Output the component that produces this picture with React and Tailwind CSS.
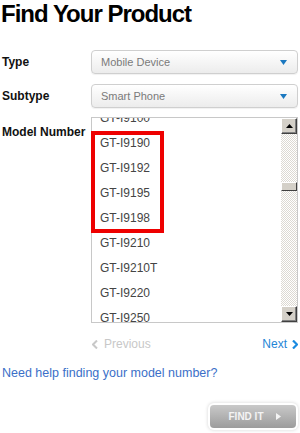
const models = [
  "GT-I9100",
  "GT-I9190",
  "GT-I9192",
  "GT-I9195",
  "GT-I9198",
  "GT-I9210",
  "GT-I9210T",
  "GT-I9220",
  "GT-I9250",
];

function SelectBox({ value }) {
  return (
    <div className="w-[207px] h-[24px] rounded-[4px] border border-[#cfcfcf] bg-gradient-to-b from-white to-[#ececec] flex items-center justify-between pl-[9px] pr-[10px] shadow-[0_1px_1px_rgba(0,0,0,0.06)]">
      <span className="text-[11px] text-[#7a7a7a]">{value}</span>
      <svg width="7" height="5" viewBox="0 0 7 5">
        <path d="M0 0 L7 0 L3.5 5 Z" fill="#1b78c0" />
      </svg>
    </div>
  );
}

function ScrollButton({ up }) {
  return (
    <div className="w-[16px] h-[16px] bg-[#d4d0c8] border border-t-white border-l-white border-r-[#404040] border-b-[#404040] flex items-center justify-center shadow-[inset_-1px_-1px_0_#808080]">
      <svg width="7" height="4" viewBox="0 0 7 4">
        <path d={up ? "M3.5 0 L7 4 L0 4 Z" : "M0 0 L7 0 L3.5 4 Z"} fill="#000" />
      </svg>
    </div>
  );
}

export default function App() {
  return (
    <div className="relative w-[300px] h-[433px] bg-white font-['Liberation_Sans',Arial,sans-serif] text-[#111]">
      <h1 className="h-[28px] leading-[28px] pl-[1px] text-[24px] font-bold tracking-[-1px] text-black">
        Find Your Product
      </h1>

      <div className="mt-[22px] flex items-center">
        <div className="w-[91px] pl-[2px] text-[12px] font-bold">Type</div>
        <SelectBox value="Mobile Device" />
      </div>

      <div className="mt-[10px] flex items-center">
        <div className="w-[91px] pl-[2px] text-[12px] font-bold">Subtype</div>
        <SelectBox value="Smart Phone" />
      </div>

      <div className="mt-[9px] flex items-start">
        <div className="w-[91px] pl-[2px] pt-[6px] text-[12px] font-bold">Model Number</div>
        <div className="w-[207px] h-[206px] border border-[#c8c8c8] flex">
          <div className="flex-1 overflow-hidden">
            <div className="-mt-[13px]">
              {models.map((m) => (
                <div key={m} className="h-[25px] flex items-center pl-[8px] text-[12px] text-[#444]">
                  {m}
                </div>
              ))}
            </div>
          </div>
          <div className="w-[16px] flex flex-col bg-[repeating-conic-gradient(#dcd9d2_0_25%,#ffffff_0_50%)] bg-[length:2px_2px]">
            <ScrollButton up />
            <div className="mt-[48px] h-[9px] bg-[#d4d0c8] border border-t-white border-l-white border-r-[#404040] border-b-[#404040]" />
            <div className="flex-1" />
            <ScrollButton />
          </div>
        </div>
      </div>

      <div className="mt-[13px] h-[16px] flex items-center justify-between pl-[92px] pr-[2px] text-[12px]">
        <div className="flex items-center gap-[6px] text-[#c8c8c8]">
          <svg width="6" height="9" viewBox="0 0 6 9">
            <path d="M5 0.5 L1 4.5 L5 8.5" stroke="#c8c8c8" strokeWidth="2" fill="none" />
          </svg>
          <span>Previous</span>
        </div>
        <div className="flex items-center gap-[5px] text-[#1f86d6]">
          <span>Next</span>
          <svg width="6" height="9" viewBox="0 0 6 9">
            <path d="M1 0.5 L5 4.5 L1 8.5" stroke="#1a8be0" strokeWidth="2.2" fill="none" />
          </svg>
        </div>
      </div>

      <div className="mt-[13px] h-[16px] flex items-center pl-[2px] text-[12.5px] text-[#3b6fc8]">
        Need help finding your model number?
      </div>

      <div className="mt-[24px] flex justify-end pr-[4px]">
        <div className="w-[86px] h-[23px] rounded-[4px] bg-gradient-to-b from-[#c9c9c9] to-[#9c9c9c] shadow-[0_0_0_2px_#ffffff,0_0_3px_3px_#e6e6e6] flex items-center justify-center gap-[12px] pl-[3px] text-[#f4f4f4] text-[10px] font-bold">
          <span>FIND IT</span>
          <svg width="5" height="7" viewBox="0 0 5 7">
            <path d="M0 0 L5 3.5 L0 7 Z" fill="#f4f4f4" />
          </svg>
        </div>
      </div>

      <div className="absolute left-[91px] top-[131px] w-[73px] h-[102px] border-[4px] border-[#ee0000]" />
    </div>
  );
}
